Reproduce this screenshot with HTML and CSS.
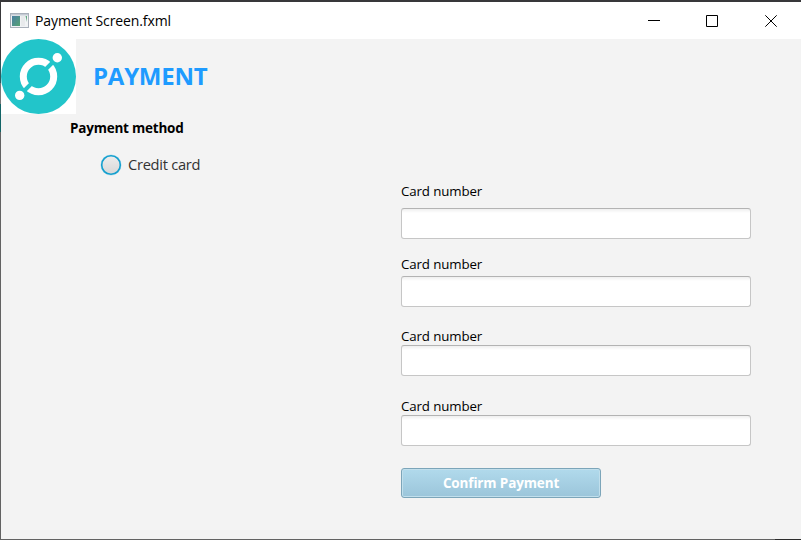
FILE: index.html
```
<!DOCTYPE html>
<html lang="en">
<head>
<meta charset="utf-8">
<title>Payment Screen.fxml</title>
<link rel="stylesheet" href="styles.css">
</head>
<body>
<div class="window">
  <header class="titlebar">
    <svg class="app-icon" width="20" height="16" viewBox="0 0 20 16">
      <defs><linearGradient id="pane" x1="0" y1="0" x2="1" y2="1"><stop offset="0" stop-color="#4b7fa3"/><stop offset="1" stop-color="#55a373"/></linearGradient></defs>
      <rect x=".5" y=".5" width="18" height="14" fill="#f1f3f5" stroke="#a9b0ba"/>
      <rect x="1" y="1" width="17" height="1.5" fill="#c4cbd4"/>
      <rect x="2" y="3" width="8" height="10" fill="url(#pane)"/>
      <rect x="11" y="3" width="4" height="10" fill="#e8eaec"/>
      <path d="M15.5 3h1.5v6z" fill="#63a982"/>
    </svg>
    <span class="title">Payment Screen.fxml</span>
    <div class="controls">
      <svg width="12" height="12" viewBox="0 0 12 12"><path d="M0 5.5h12"/></svg>
      <svg width="12" height="12" viewBox="0 0 12 12"><path d="M.5 .5h11v11H.5z"/></svg>
      <svg class="close" width="12" height="12" viewBox="0 0 12 12"><path d="M.3 .3l11.4 11.4M11.7 .3L.3 11.7"/></svg>
    </div>
  </header>
  <div class="brand">
    <svg class="logo" width="75" height="75" viewBox="0 0 75 75">
      <rect width="75" height="75" fill="#fff"/>
      <circle cx="37.5" cy="37.5" r="37.5" fill="#22c5ca"/>
      <circle cx="37.5" cy="37.5" r="15.2" fill="none" stroke="#fff" stroke-width="7"/>
      <path d="M45 30L53 22M30 45L22 53" stroke="#22c5ca" stroke-width="4"/>
      <circle cx="56.3" cy="18.8" r="4.7" fill="#fff"/>
      <circle cx="18.7" cy="56.4" r="4.7" fill="#fff"/>
    </svg>
    <h1>PAYMENT</h1>
  </div>
  <main class="content">
    <section class="method">
      <h2>Payment method</h2>
      <label class="option"><svg class="radio" width="24" height="24" viewBox="0 0 24 24">
        <defs><linearGradient id="dot" x1="0" y1="0" x2="0" y2="1"><stop offset="0" stop-color="#ededed"/><stop offset="1" stop-color="#d7d7d7"/></linearGradient></defs>
        <circle cx="12" cy="12" r="10.5" fill="#b5e0ef"/>
        <circle cx="12" cy="12" r="9.3" fill="url(#dot)" stroke="#149fce" stroke-width="1.6"/>
      </svg><span>Credit card</span></label>
    </section>
    <form class="form">
      <label class="field first"><span>Card number</span><input type="text"></label>
      <label class="field second"><span>Card number</span><input type="text"></label>
      <label class="field third"><span>Card number</span><input type="text"></label>
      <label class="field fourth"><span>Card number</span><input type="text"></label>
      <button type="button">Confirm Payment</button>
    </form>
  </main>
</div>
</body>
</html>
```
FILE: styles.css
```
* { box-sizing: border-box; }
body { margin: 0; background: #fff; font-family: "Open Sans", "Noto Sans", sans-serif; color: #000; }
.window {
  width: 801px;
  height: 540px;
  padding: 2px 0 0 1px;
  background:
    linear-gradient(#38383a, #38383a) 0 0 / 100% 2px no-repeat,
    linear-gradient(#2b2b2b, #2b2b2b) 100% 100% / 26px 1px no-repeat,
    linear-gradient(#626262, #626262) 0 100% / 100% 1px no-repeat,
    linear-gradient(#38383a 60px, #31595c 60px 83px, #777 83px 104px, #126466 104px 132px, #626262 132px) 0 0 / 1px 100% no-repeat,
    #f3f3f3;
}
.titlebar { display: flex; align-items: center; height: 37px; padding-left: 9px; background: #fff; }
.app-icon { margin-right: 5px; }
.title { font-size: 14px; line-height: 20px; letter-spacing: -.1px; white-space: nowrap; }
.controls { display: flex; align-items: center; gap: 46px; margin-left: auto; padding-right: 24px; }
.controls svg { fill: none; stroke: #000; stroke-width: 1; }
.controls .close { margin-left: 1px; }
.brand { display: flex; align-items: center; height: 75px; }
h1 { margin: 0 0 2px 17px; font-size: 24px; line-height: 32px; font-weight: 700; letter-spacing: -.25px; color: #1e9bff; white-space: nowrap; }
.content { display: flex; }
.method { width: 400px; padding: 4px 0 0 69px; }
h2 { margin: 0; font-size: 13.5px; line-height: 20px; font-weight: 700; letter-spacing: -.22px; }
.option { display: flex; align-items: center; gap: 5px; margin: 15px 0 0 29px; font-size: 14.7px; line-height: 20px; letter-spacing: -.3px; color: #333; }
.option span { margin-bottom: 2px; }
.form { width: 350px; padding-top: 67px; }
.field { display: flex; flex-direction: column; font-size: 13.3px; line-height: 20px; letter-spacing: -.12px; }
.field input {
  width: 350px; height: 31px; padding: 0 8px; font: inherit;
  border: 1px solid #c6c6c6; border-top-color: #b3b3b3; border-radius: 3px;
  background: linear-gradient(#efefef, #fff 4px); outline: none;
}
.first input { margin-top: 7px; }
.second { margin-top: 15px; }
.second input { margin-top: 2px; }
.third { margin-top: 19px; }
.fourth { margin-top: 20px; }
.third input, .fourth input { margin-top: -1px; }
button {
  display: block; width: 200px; height: 30px; margin: 22px 0 0; padding: 0;
  border: 1px solid #7ca5b9; border-radius: 3px;
  background: linear-gradient(#b1daec, #9bc5da); box-shadow: inset 0 0 0 1px #c1dfec;
  color: #fff; font: 700 13.5px/20px "Open Sans", "Noto Sans", sans-serif; letter-spacing: -.14px;
}
```
